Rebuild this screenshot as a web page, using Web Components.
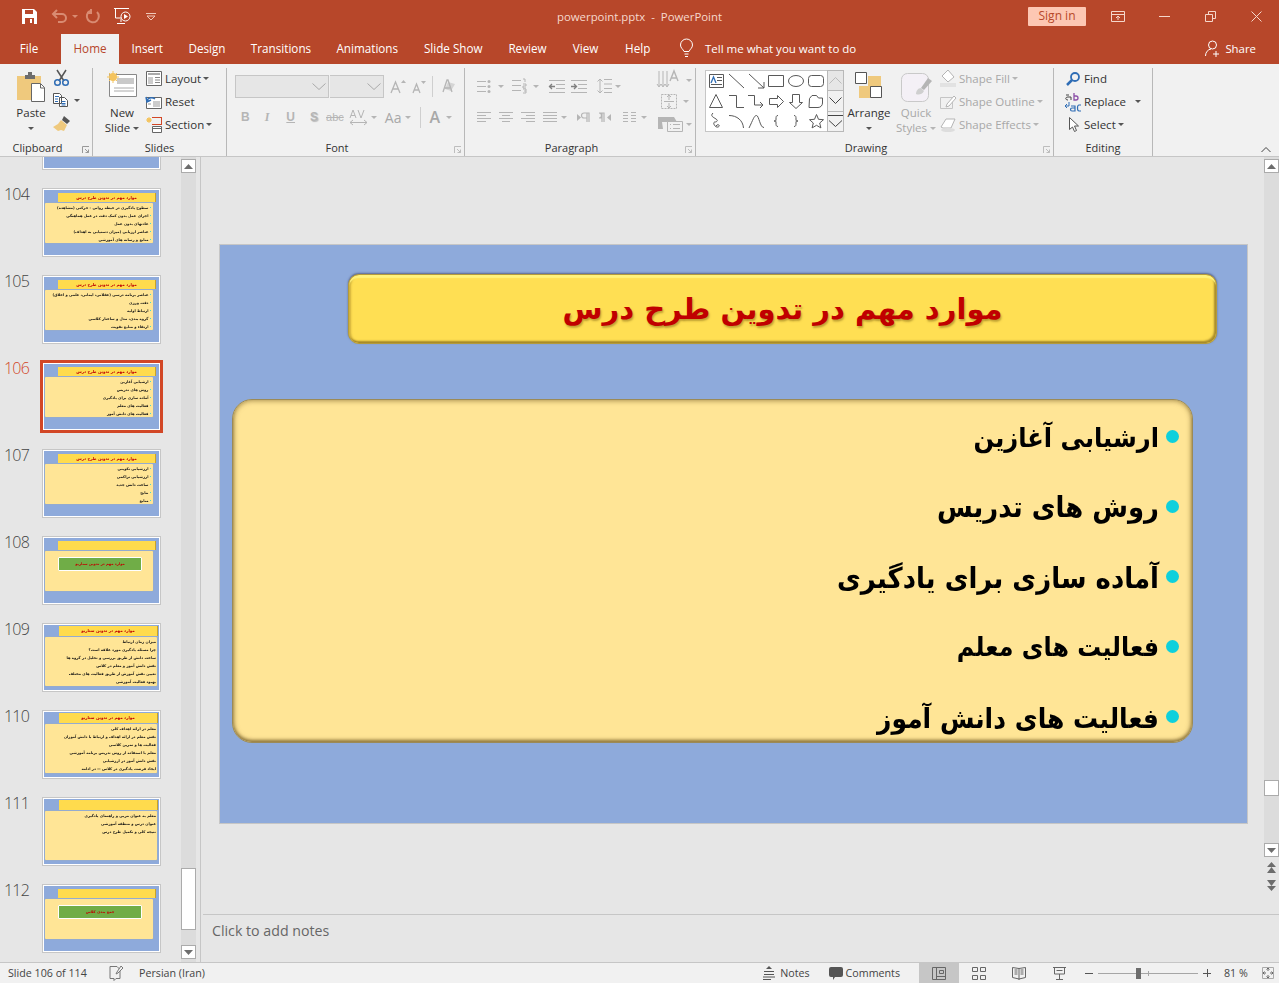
<!doctype html>
<html lang="en">
<head>
<meta charset="utf-8">
<title>powerpoint.pptx - PowerPoint</title>
<style>
  html, body { margin: 0; height: 100%; overflow: hidden; background: #e6e6e6; }
  body { font: 12px "Open Sans", "Noto Sans", sans-serif; color: #333; }
</style>
</head>
<body>
<pp-app></pp-app>

<script>
'use strict'

// ---- icons: [width, height, markup] ----

const G = '#b5b5b5'   // disabled ribbon grey
const D = '#595959'
const B = '#2f6db5'
const T = '#efc97d'

const ICONS = {
  save: [15, 15, `<path d="M0 0h12l3 3v12H0z" fill="#fff"/><path d="M3 1h8v4H3z" fill="#b7472a"/><path d="M3 9h9v6H3z" fill="#b7472a"/><path d="M8 10h2v4H8z" fill="#fff"/>`],
  undo: [16, 14, `<path d="M5 1 1 5l4 4M1 5h9a4 4 0 0 1 0 8H6" fill="none" stroke="#d98b72" stroke-width="2"/>`],
  redo: [14, 14, `<path d="M4 2a6 6 0 1 0 7 1M5 0v4H1" fill="none" stroke="#d98b72" stroke-width="2"/>`],
  present: [17, 17, `<path d="M0 .5h15M1.5 1v9h6M7 11v3M3 15.5h8" fill="none" stroke="#fff"/><circle cx="11.5" cy="8.5" r="4.5" fill="#b7472a" stroke="#fff"/><path d="M10 6v5l4-2.5z" fill="#fff"/>`],
  qat: [10, 7, `<path d="M0 .5h10M1 3h8L5 7z" fill="none" stroke="#f0c8b8"/>`],
  bulb: [13, 18, `<path d="M4 12.5C3 10 .5 9 .5 6a6 6 0 0 1 12 0c0 3-2.5 4-3.5 6.5zM4.5 15h4M5 17.5h3" fill="none" stroke="#fff"/>`],
  person: [15, 17, `<circle cx="7.5" cy="5" r="4" fill="none" stroke="#fff"/><path d="M.5 16c0-4 2.5-6.5 5.5-7M11 11v6M8 14h6" fill="none" stroke="#fff"/>`],
  ribbonopt: [14, 11, `<path d="M.5.5h13v10H.5zM.5 3.5h13M7 9V5M5 7l2-2 2 2" fill="none" stroke="#f5d7cb"/>`],
  minimize: [11, 1, `<path d="M0 .5h11" stroke="#f5d7cb"/>`],
  restore: [11, 11, `<path d="M.5 3.5h7v7h-7zM3.5 3V.5h7v7H8" fill="none" stroke="#f5d7cb"/>`],
  close: [11, 11, `<path d="M.5.5l10 10M10.5.5l-10 10" stroke="#f5d7cb"/>`],

  paste: [28, 30, `<path d="M0 4h24v24H0z" fill="${T}"/><path d="M8 3h3V0h4v3h3v4H8z" fill="#6d6d6d"/><path d="M14.5 11.5h9l4 4v14h-13z" fill="#fff" stroke="#666"/><path d="M23.5 12v4h4" fill="none" stroke="#666"/>`],
  cut: [15, 16, `<path d="M3 0l7 11M12 0 5 11" stroke="#555" stroke-width="1.5"/><circle cx="3.5" cy="12.5" r="2.8" fill="none" stroke="${B}" stroke-width="1.5"/><circle cx="11.5" cy="12.5" r="2.8" fill="none" stroke="${B}" stroke-width="1.5"/>`],
  copy: [15, 14, `<path d="M.5.5h6l2 2v8h-8zM6.5 4.5h5l3 3v6h-8z" fill="#fff" stroke="#555"/><path d="M2 3.5h4M2 6h3M2 8.5h3M8.5 8.5h4M8.5 10.5h4M8.5 12h4" stroke="${B}"/>`],
  painter: [17, 15, `<path d="M11 0l6 5-3 3-5-4z" fill="#555"/><path d="M8 4l6 5-3 6-3-1-3 1-5-4 5-3z" fill="${T}"/>`],
  newslide: [31, 27, `<path d="M2.5 3.5h27v22h-27z" fill="#fff" stroke="#888"/><path d="M10 7h17v6H10z" fill="#c9c9c9"/><path d="M7 17h20M7 20h20" stroke="#aaa"/><circle cx="6" cy="6" r="4" fill="#f4c45f"/><path d="M6 0v12M0 6h12M2 2l8 8M10 2l-8 8" stroke="#f4c45f"/>`],
  layout: [16, 15, `<path d="M.5.5h15v14H.5z" fill="#fff" stroke="#666"/><path d="M2 2h12v2H2z" fill="#aaa"/><path d="M2 6h5v7H2z" fill="#ccc"/><path d="M9 6.5h5M9 9h5M9 11.5h5" stroke="#888"/>`],
  reset: [16, 15, `<path d="M.5 3.5h15v11H.5z" fill="#fff" stroke="#666"/><path d="M7 7h7v6H7z" fill="#ccc"/><path d="M2 10h3" stroke="#999"/><path d="M9 5A5 4 0 0 0 2 5l-1 3M0 3l1 5 4-2" fill="none" stroke="${B}" stroke-width="1.5"/>`],
  section: [16, 16, `<path d="M6 .5h10M6 7.5h10M15.5 0v8" stroke="#d24726" fill="none"/><path d="M6.5 9.5h9v6h-9zM6.5 11.5h9" fill="#fff" stroke="#666"/><circle cx="3" cy="3" r="2" fill="#f4c45f"/><path d="M3 0v6M0 3h6M1 1l4 4M5 1 1 5" stroke="#f4c45f"/>`],
  grow: [15, 13, `<path d="M0 13 4.5 2 9 13M2 9h5" fill="none" stroke="${G}" stroke-width="1.3"/><path d="M10 3l2.5-3L15 3z" fill="${G}"/>`],
  shrink: [14, 12, `<path d="M1 12 4.5 3 8 12M2 9h5" fill="none" stroke="${G}" stroke-width="1.3"/><path d="M9 0h5l-2.5 3z" fill="${G}"/>`],
  av: [17, 15, `<path d="M0 8 3 0l3 8M1 5.5h4M8 0l3 8 3-8" fill="none" stroke="${G}"/><path d="M0 12.5h17M3 10l-3 2.5L3 15M14 10l3 2.5-3 2.5" fill="none" stroke="${G}"/>`],
  eraser: [15, 16, `<path d="M6 3l7 2-4 7-6-2z" fill="#d5d5d5"/><path d="M1 13 5 1h1l4 12M3 9h5" fill="none" stroke="${G}" stroke-width="1.3"/>`],
  bullets: [14, 13, `<path d="M0 1.5h9M0 6.5h9M0 11.5h9" stroke="${G}"/><circle cx="12" cy="1.5" r="1.5" fill="${G}"/><circle cx="12" cy="6.5" r="1.5" fill="${G}"/><circle cx="12" cy="11.5" r="1.5" fill="${G}"/>`],
  numbers: [14, 14, `<path d="M0 1.5h9M0 6.5h9M0 11.5h9M11 0h2v3M11 5h3v2h-3v2h3M11 10h3v4h-3M12 12h2" fill="none" stroke="${G}"/>`],
  indentl: [16, 13, `<path d="M0 .5h16M7 4.5h9M7 8.5h9M0 12.5h16" stroke="${G}"/><path d="M0 6.5h6M3 4 .5 6.5 3 9" fill="none" stroke="${D}" opacity=".75" stroke-width="1.3"/>`],
  indentr: [16, 13, `<path d="M0 .5h16M7 4.5h9M7 8.5h9M0 12.5h16" stroke="${G}"/><path d="M0 6.5h5M3 4l2.5 2.5L3 9" fill="none" stroke="${D}" opacity=".75" stroke-width="1.3"/>`],
  linesp: [15, 16, `<path d="M7 1.5h8M7 6h8M7 10.5h8M7 14.5h8M3 1v14M.5 3.5 3 1l2.5 2.5M.5 12.5 3 15l2.5-2.5" fill="none" stroke="${G}"/>`],
  left: [14, 11, `<path d="M0 .5h14M0 3.5h9M0 6.5h14M0 9.5h9" stroke="${G}"/>`],
  center: [14, 11, `<path d="M0 .5h14M3 3.5h8M0 6.5h14M3 9.5h8" stroke="${G}"/>`],
  right: [14, 11, `<path d="M0 .5h14M5 3.5h9M0 6.5h14M5 9.5h9" stroke="${G}"/>`],
  justify: [14, 11, `<path d="M0 .5h14M0 3.5h14M0 6.5h14M0 9.5h14" stroke="${G}"/>`],
  ltr: [12, 9, `<path d="M0 1l4 3.5L0 8z" fill="${G}"/><path d="M7 0h5v9M10 0v9M7 0a2.5 2.5 0 0 0 0 5h3" fill="none" stroke="${G}" stroke-width="1.2"/>`],
  rtl: [12, 9, `<path d="M12 1 8 4.5 12 8z" fill="${G}"/><path d="M0 0h5v9M3 0v9M0 0a2.5 2.5 0 0 1 0 5h3" fill="none" stroke="${G}" stroke-width="1.2"/>`],
  columns: [13, 11, `<path d="M0 .5h5M8 .5h5M0 3.5h5M8 3.5h5M0 6.5h5M8 6.5h5M0 9.5h5M8 9.5h5" stroke="${G}"/>`],
  textdir: [25, 18, `<path d="M1 0v15M5 0v15M9 0v15M-1 13l2 3 2-3M3 13l2 3 2-3M7 13l2 3 2-3" fill="none" stroke="${G}"/><path d="M12 10 16 0l4 10M13.5 7h5" fill="none" stroke="${G}" stroke-width="1.4"/>`],
  textalign: [16, 15, `<path d="M.5.5h15v14H.5z" fill="none" stroke="${G}" stroke-dasharray="2 1"/><path d="M8 1v5M6 3l2-2 2 2M8 14V9M6 12l2 2 2-2M3 7.5h10" fill="none" stroke="${G}"/>`],
  smartart: [25, 16, `<path d="M0 1h16l3 5H4l1 7H0z" fill="${G}"/><path d="M9.5 5.5h15v10h-15z" fill="#f1f1f1" stroke="${G}"/><path d="M12 8.5h1M15 8.5h7M12 12.5h1M15 12.5h7" stroke="${G}"/>`],

  textbox: [15, 14, `<path d="M.5.5h14v13H.5z" fill="#fff" stroke="${D}"/><path d="M2 9l2.5-6L7 9" fill="none" stroke="${B}" stroke-width="1.3"/><path d="M8 3.5h5M8 6.5h5M2 10.5h11" stroke="${D}"/>`],
  sline: [15, 14, `<path d="M0 0l15 14" stroke="${D}"/>`],
  sarrow: [15, 14, `<path d="M0 0l15 14M9 14h6V8" fill="none" stroke="${D}"/>`],
  srect: [16, 12, `<path d="M.5.5h15v11H.5z" fill="none" stroke="${D}"/>`],
  sellipse: [16, 12, `<ellipse cx="8" cy="6" rx="7.5" ry="5.5" fill="none" stroke="${D}"/>`],
  sround: [16, 12, `<rect x=".5" y=".5" width="15" height="11" rx="3" fill="none" stroke="${D}"/>`],
  striangle: [14, 14, `<path d="M7 .5l6.5 13H.5z" fill="none" stroke="${D}"/>`],
  selbow: [15, 13, `<path d="M0 .5h7.5v12H15" fill="none" stroke="${D}"/>`],
  selbowa: [16, 13, `<path d="M0 .5h6.5V10H15M12 7l3 3-3 3" fill="none" stroke="${D}"/>`],
  sarrowr: [15, 13, `<path d="M.5 3.5h8V.5l6 6-6 6v-3h-8z" fill="none" stroke="${D}"/>`],
  sarrowd: [14, 15, `<path d="M3.5.5h7v8h3L7 14.5.5 8.500h3z" fill="none" stroke="${D}"/>`],
  ssnip: [14, 13, `<path d="M.5 3.5 3 .5h4.500l2 2.500h4v5c0 2.500-2 4.500-4.500 4.500h-9z" fill="none" stroke="${D}"/>`],
  sfree: [10, 16, `<path d="M2 0c-3 3 0 4 3 6 3 2 0 3-1 3-3 0 0 6 3 5 3-1 0-4-2-1" fill="none" stroke="${D}"/>`],
  sarc: [15, 13, `<path d="M0 .5c8 0 14 5 14.5 12.5" fill="none" stroke="${D}"/>`],
  scurve: [15, 13, `<path d="M0 13C4 5 5 .5 7.5.5S11 13 15 12.5" fill="none" stroke="${D}"/>`],
  slbrace: [6, 12, `<path d="M5 .5C3 .5 3 2 3 4s0 2-2 2c2 0 2 0 2 2s0 3.5 2 3.5" fill="none" stroke="${D}"/>`],
  srbrace: [6, 12, `<path d="M1 .5C3 .5 3 2 3 4s0 2 2 2c-2 0-2 0-2 2s0 3.5-2 3.5" fill="none" stroke="${D}"/>`],
  sstar: [15, 14, `<path d="M7.5.5l2 4.8 5 .4-3.800 3.300 1.200 4.900-4.400-2.600-4.400 2.600 1.200-4.900L.5 5.700l5-.4z" fill="none" stroke="${D}"/>`],

  arrange: [28, 27, `<path d="M13 4h13v12H13zM4 14h14v12H4z" fill="${T}"/><path d="M.5.5h11v11H.5zM15.5 14.5h11v11h-11z" fill="#fff" stroke="#555"/>`],
  quick: [32, 31, `<rect x=".5" y=".5" width="27" height="28" rx="6" fill="#f4f0f6" stroke="#c9c9c9"/><path d="M31 8l-8 9-3-2 7-10z" fill="${G}"/><path d="M20 15c-3 0-5 3-5 6 2 1 6 1 8-3z" fill="#cfcfcf"/>`],
  fill: [16, 17, `<path d="M8 0l6 7-6 5-6-6z" fill="#fff" stroke="${G}"/><path d="M0 13h16v4H0z" fill="#e2e2e2"/>`],
  outline: [16, 14, `<path d="M.5 2.5h12v11H.5z" fill="none" stroke="#c5c5c5"/><path d="M7 9l-1 3 3-1 7-8-2-2z" fill="#fff" stroke="${G}"/>`],
  effects: [16, 14, `<path d="M1 9 6 1h9l-4 9H3z" fill="#fff" stroke="${G}"/><ellipse cx="8" cy="12" rx="7" ry="2" fill="#ddd"/>`],
  find: [14, 14, `<circle cx="9" cy="5" r="4" fill="none" stroke="#2f6db5" stroke-width="1.8"/><path d="M6 8l-5 5" stroke="#2f6db5" stroke-width="2.5"/>`],
  replace: [16, 18, `<path d="M3 7c-3 0-3-3 0-3h3v3M1 2h3" fill="none" stroke="#444"/><path d="M9 0v7h2a2 2 0 0 0 0-4H9" fill="none" stroke="#8b4fa8" stroke-width="1.3"/><path d="M0 13h4M2 11l-2 2 2 2M4 9v4" fill="none" stroke="${B}"/><path d="M6 13h4v5H7c-2 0-2-3 0-3h3" fill="none" stroke="${B}" stroke-width="1.2"/><path d="M16 12h-2c-2 0-2 6 0 6h2" fill="none" stroke="${B}" stroke-width="1.2"/>`],
  cursor: [10, 15, `<path d="M.5.5v12l3-2.5 2 4.5 2-1-2-4.5h4z" fill="#fff" stroke="#555"/>`],
  collapse: [10, 5, `<path d="M.5 5 5 .5 9.5 5" fill="none" stroke="#444"/>`],
  launcher: [7, 7, `<path d="M.5 7V.5H7M3 3l3.5 3.5M3.5 6.5h3v-3" fill="none" stroke="#999"/>`],
  launcherd: [7, 7, `<path d="M.5 7V.5H7M3 3l3.5 3.5M3.5 6.5h3v-3" fill="none" stroke="#bdbdbd"/>`],
  chevd: [14, 7, `<path d="M.5.5 7 6.5 13.5.5" fill="none" stroke="#aaa"/>`],
  galup: [13, 7, `<path d="M.5 6.5 6.5.5l6 6" fill="none" stroke="#bbb"/>`],
  galdn: [13, 7, `<path d="M.5.5l6 6 6-6" fill="none" stroke="#444"/>`],
  galmore: [15, 13, `<path d="M0 .5h15" stroke="#444"/><path d="M1 5.5l6.5 6 6.5-6" fill="none" stroke="#444"/>`],

  sbup: [9, 5, `<path d="M4.5 0 9 5H0z" fill="#6d6d6d"/>`],
  sbdown: [9, 5, `<path d="M0 0h9L4.5 5z" fill="#6d6d6d"/>`],
  pageup: [9, 11, `<path d="M4.5 0 9 5H0zM4.5 5 9 11H0z" fill="#6d6d6d"/>`],
  pagedown: [9, 11, `<path d="M0 0h9L4.5 6zM0 6h9l-4.5 5z" fill="#6d6d6d"/>`],

  notesicon: [15, 15, `<path d="M2 .5h7l3 3v9H8l-2 2v-2H2z" fill="none" stroke="#777"/><path d="M13 0l2 2-5 5-2 1 1-2z" fill="#f1f1f1" stroke="#777"/>`],
  notesbtn: [12, 14, `<path d="M1 5.5h10M1 8.5h10M0 11h12M0 13.5h8" stroke="#555" fill="none"/><path d="M3 3l3-3 3 3z" fill="#555"/>`],
  comment: [14, 13, `<path d="M2 0h10a2 2 0 0 1 2 2v6a2 2 0 0 1-2 2H6l-2 3v-3H2a2 2 0 0 1-2-2V2a2 2 0 0 1 2-2z" fill="#555"/>`],
  vnormal: [14, 13, `<path d="M.5.5h13v12H.5zM4.5.5v12M7.5 3.5h4v3h-4zM4.5 9.5h9" fill="none" stroke="#666"/>`],
  vsorter: [14, 13, `<path d="M.5.5h5v4h-5zM8.5.5h5v4h-5zM.5 8.5h5v4h-5zM8.5 8.5h5v4h-5z" fill="none" stroke="#666"/>`],
  vreading: [14, 14, `<path d="M.5 1.5l6.5 1 6.5-1v10L7 13 .5 11.5zM7 2v12M2.5 4h3M2.5 6h3M2.5 8h3M8.5 4h3M8.5 6h3M8.5 8h3" fill="none" stroke="#666"/>`],
  vshow: [13, 13, `<path d="M0 .5h13M1.5 1v6h10V1M6.5 7v5M3 12.5h7M3.5 3.5h6" fill="none" stroke="#666"/>`],
  fit: [12, 12, `<path d="M.5.5h11v11H.5z" fill="none" stroke="#aaa"/><path d="M6 1v3M4.5 2.5 6 1l1.5 1.5M6 11V8M4.5 9.5 6 11l1.5-1.5M1 6h3M2.5 4.5 1 6l1.5 1.5M11 6H8M9.5 4.5 11 6 9.5 7.5" fill="none" stroke="#666"/>`]
}

class PpIcon extends HTMLElement {
  connectedCallback() {
    if (this.shadowRoot) return
    const [w, h, body] = ICONS[this.getAttribute('n')]
    this.attachShadow({ mode: 'open' }).innerHTML = `
      <style>:host { display: block; flex: none; width: ${w}px; height: ${h}px; line-height: 0; } svg { display: block; overflow: visible; }</style>
      <svg width="${w}" height="${h}" viewBox="0 0 ${w} ${h}" xmlns="http://www.w3.org/2000/svg">${body}</svg>`
  }
}
customElements.define('pp-icon', PpIcon)


// ---- title bar ----

class PpTitlebar extends HTMLElement {
  constructor() {
    super()
    this.attachShadow({ mode: 'open' }).innerHTML = `
      <style>
        :host { display: grid; grid-template-columns: 1fr auto 1fr; align-items: center; height: 32px; background: #b7472a; color: #f6d9cd; font-size: 11.4px; }
        .qat, .win { display: flex; align-items: center; }
        .qat { padding-left: 22px; }
        .win { justify-content: flex-end; }
        .caret { width: 0; height: 0; border: 3px solid transparent; border-bottom: 0; border-top-color: #d98b72; margin: 0 8px 0 4px; }
        .signin { width: 58px; height: 19px; line-height: 18px; text-align: center; background: #fdc7b3; color: #b7472a; border-radius: 1px; font-size: 12px; margin-right: 25px; }
        .gap1 { margin-left: 14px; } .gap2 { margin-left: 15px; }
        .w1 { margin-right: 34px; } .w2 { margin-right: 35px; } .w3 { margin-right: 35px; } .w4 { margin-right: 17px; }
      </style>
      <div class="qat">
        <pp-icon n="save"></pp-icon>
        <pp-icon n="undo" style="margin-left:15px"></pp-icon>
        <span class="caret"></span>
        <pp-icon n="redo"></pp-icon>
        <pp-icon n="present" class="gap1"></pp-icon>
        <pp-icon n="qat" class="gap2"></pp-icon>
      </div>
      <div>powerpoint.pptx&nbsp; - &nbsp;PowerPoint</div>
      <div class="win">
        <div class="signin">Sign in</div>
        <pp-icon n="ribbonopt" class="w1"></pp-icon>
        <pp-icon n="minimize" class="w2"></pp-icon>
        <pp-icon n="restore" class="w3"></pp-icon>
        <pp-icon n="close" class="w4"></pp-icon>
      </div>`
  }
}
customElements.define('pp-titlebar', PpTitlebar)


// ---- tabs ----

const TABS = [['File', 58], ['Home', 58], ['Insert', 56.5], ['Design', 63], ['Transitions', 85], ['Animations', 87.5], ['Slide Show', 84.5], ['Review', 64], ['View', 52], ['Help', 52.5]]

class PpTabs extends HTMLElement {
  constructor() {
    super()
    this.attachShadow({ mode: 'open' }).innerHTML = `
      <style>
        :host { display: flex; align-items: stretch; height: 32px; background: #b7472a; color: #fff; font-size: 11.7px; }
        .tab { flex: none; display: flex; align-items: center; justify-content: center; height: 30px; margin-top: 2px; padding-bottom: 2px; box-sizing: border-box; white-space: nowrap; }
        .tab.on { background: #f1f1f1; color: #b7472a; }
        .tab.file { margin-right: 3px; }
        .tell { display: flex; align-items: center; gap: 12px; margin-left: 16px; font-size: 11.5px; }
        .share { display: flex; align-items: center; gap: 5px; margin-left: auto; margin-right: 23px; font-size: 11.4px; }
      </style>
      ${TABS.map(([t, w]) => `<div class="tab${t == 'Home' ? ' on' : ''}${t == 'File' ? ' file' : ''}" style="width:${w}px">${t}</div>`).join('')}
      <div class="tell"><pp-icon n="bulb"></pp-icon><span>Tell me what you want to do</span></div>
      <div class="share"><pp-icon n="person"></pp-icon><span>Share</span></div>`
  }
}
customElements.define('pp-tabs', PpTabs)


// ---- ribbon ----

class PpGroup extends HTMLElement {
  constructor() {
    super()
    const corner = this.getAttribute('launcher')
    this.attachShadow({ mode: 'open' }).innerHTML = `
      <style>
        :host { display: flex; flex: none; flex-direction: column; box-sizing: border-box; height: 88px; margin-top: 4px; border-right: 1px solid #b8b8b8; position: relative; }
        .body { flex: 1; display: flex; min-height: 0; }
        .label { height: 14px; line-height: 14px; margin-bottom: 1px; padding-right: ${corner ? 17 : 0}px; text-align: center; color: #333; font-size: 11px; }
        pp-icon { position: absolute; right: 3px; bottom: 3px; }
      </style>
      <div class="body"><slot></slot></div>
      <div class="label"></div>`
    this.shadowRoot.querySelector('.label').textContent = this.getAttribute('label')
    if (corner) {
      const i = document.createElement('pp-icon')
      i.setAttribute('n', corner)
      this.shadowRoot.appendChild(i)
    }
  }
}
customElements.define('pp-group', PpGroup)

const GALLERY = ['textbox', 'sline', 'sarrow', 'srect', 'sellipse', 'sround', 'striangle', 'selbow', 'selbowa', 'sarrowr', 'sarrowd', 'ssnip', 'sfree', 'sarc', 'scurve', 'slbrace', 'srbrace', 'sstar']

class PpRibbon extends HTMLElement {
  constructor() {
    super()
    const ic = (n, st) => `<pp-icon n="${n}"${st ? ` style="${st}"` : ''}></pp-icon>`
    const caret = (st) => `<i class="caret"${st ? ` style="${st}"` : ''}></i>`
    const off = (st) => `<i class="caret off"${st ? ` style="${st}"` : ''}></i>`
    this.attachShadow({ mode: 'open' }).innerHTML = `
      <style>
        :host { display: flex; position: relative; height: 93px; box-sizing: border-box; background: #f1f1f1; border-bottom: 1px solid #c6c6c6; font-size: 11.5px; color: #333; }
        .caret { display: inline-block; width: 0; height: 0; border: 3px solid transparent; border-bottom: 0; border-top-color: #555; flex: none; }
        .caret.off { border-top-color: #b5b5b5; }
        .big { display: flex; flex-direction: column; align-items: center; flex: none; line-height: 15px; text-align: center; }
        .big .words { margin-top: auto; height: 36px; }
        .stack { display: flex; flex-direction: column; flex: none; margin-top: -1px; }
        .row { display: flex; align-items: center; height: 23px; white-space: nowrap; }
        .off-t { color: #a8a8a8; }
        .wordcaret { display: block; height: 15px; position: relative; top: -2px; }
        .combo { height: 21px; background: #e6e6e6; border: 1px solid #c6c6c6; display: flex; align-items: center; justify-content: flex-end; padding-right: 2px; }
        .vsep { width: 1px; height: 21px; background: #cfcfcf; }
        .bu { font: bold 12px "Liberation Sans", sans-serif; color: #b5b5b5; }
        .gal { display: flex; margin: 2px 0 0 9px; height: 62px; }
        .shapes { display: grid; grid-template-columns: repeat(6, 20px); grid-auto-rows: 20px; place-items: center; box-sizing: border-box; width: 122px; height: 62px; background: #fff; border: 1px solid #c6c6c6; border-right: 0; }
        .galbtns { display: flex; flex-direction: column; width: 17px; border: 1px solid #b8b8b8; box-sizing: border-box; }
        .galbtns div { flex: 1; display: flex; align-items: center; justify-content: center; border-top: 1px solid #b8b8b8; background: #f1f1f1; }
        .galbtns div:first-child { border-top: 0; background: #e6e6e6; }
        .chev { position: absolute; right: 8px; bottom: 4px; }
      </style>

      <pp-group label="Clipboard" launcher="launcher" style="width:93px">
        <div class="big" style="width:28px;margin-left:17px;padding-top:4px">
          ${ic('paste')}
          <div class="words"><div>Paste</div><span class="wordcaret">${caret()}</span></div>
        </div>
        <div style="display:flex;flex-direction:column;margin-left:8px;padding-top:2px">
          ${ic('cut', 'margin-left:1px')}
          <div style="display:flex;align-items:center;gap:6px;margin-top:7px">${ic('copy')}${caret()}</div>
          ${ic('painter', 'margin-top:9px')}
        </div>
      </pp-group>

      <pp-group label="Slides" style="width:134px">
        <div class="big" style="width:36px;margin-left:11px;padding-top:3px">
          ${ic('newslide', 'margin-left:1px')}
          <div class="words"><div>New</div><div>Slide ${caret('vertical-align:2px')}</div></div>
        </div>
        <div class="stack" style="margin-left:6px">
          <div class="row">${ic('layout')}<span style="margin:0 2px 0 3px">Layout</span>${caret()}</div>
          <div class="row">${ic('reset')}<span style="margin-left:3px">Reset</span></div>
          <div class="row">${ic('section')}<span style="margin:0 2px 0 3px">Section</span>${caret()}</div>
        </div>
      </pp-group>

      <pp-group label="Font" launcher="launcherd" style="width:238px">
        <div style="display:flex;flex-direction:column;margin-left:8px;padding-top:7px">
          <div style="display:flex;align-items:center">
            <div class="combo" style="width:90px">${ic('chevd')}</div>
            <div class="combo" style="width:51px;border-left:0;margin-left:1px">${ic('chevd')}</div>
            ${ic('grow', 'margin-left:7px')}
            ${ic('shrink', 'margin-left:6px')}
            <span class="vsep" style="margin-left:6px"></span>
            ${ic('eraser', 'margin-left:9px')}
          </div>
          <div style="display:flex;align-items:center;height:20px;margin-top:9px">
            <span class="bu" style="margin-left:6px">B</span>
            <span class="bu" style="margin-left:15px;font-style:italic;font-family:'Liberation Serif'">I</span>
            <span class="bu" style="margin-left:17px;text-decoration:underline">U</span>
            <span class="bu" style="margin-left:15px;text-shadow:1px 1px 1px #bbb">S</span>
            <span class="bu" style="margin-left:8px;font-weight:normal;font-size:11px;text-decoration:line-through">abc</span>
            ${ic('av', 'margin-left:6px')}${off('margin-left:4px')}
            <span class="off-t" style="margin-left:8px;font-size:14px">Aa</span>${off('margin-left:4px')}
            <span class="vsep" style="margin-left:9px"></span>
            <span class="off-t" style="margin-left:8px;font-size:16px;font-weight:600">A</span>${off('margin-left:6px')}
          </div>
        </div>
      </pp-group>

      <pp-group label="Paragraph" launcher="launcherd" style="width:231px">
        <div style="display:flex;flex-direction:column;width:181px;margin-left:12px;padding-top:10px">
          <div style="display:flex;align-items:center;height:16px">
            ${ic('bullets')}${off('margin-left:7px')}
            ${ic('numbers', 'margin-left:8px')}${off('margin-left:7px')}
            ${ic('indentl', 'margin-left:10px')}${ic('indentr', 'margin-left:6px')}
            ${ic('linesp', 'margin-left:10px')}${off('margin-left:3px')}
          </div>
          <div style="display:flex;align-items:center;height:16px;margin-top:15px">
            ${ic('left')}${ic('center', 'margin-left:8px')}${ic('right', 'margin-left:8px')}${ic('justify', 'margin-left:8px')}${off('margin-left:4px')}
            ${ic('ltr', 'margin-left:10px')}${ic('rtl', 'margin-left:10px')}${ic('columns', 'margin-left:12px')}${off('margin-left:5px')}
          </div>
        </div>
        <div style="display:flex;flex-direction:column;margin-left:0;padding-top:3px">
          <div style="display:flex;align-items:center;gap:3px">${ic('textdir')}${off()}</div>
          <div style="display:flex;align-items:center;gap:3px;margin-top:5px;padding-left:3px">${ic('textalign')}${off('margin-left:3px')}</div>
          <div style="display:flex;align-items:center;gap:3px;margin-top:7px">${ic('smartart')}${off()}</div>
        </div>
      </pp-group>

      <pp-group label="Drawing" launcher="launcherd" style="width:358px">
        <div class="gal">
          <div class="shapes">${GALLERY.map(n => ic(n)).join('')}</div>
          <div class="galbtns"><div>${ic('galup')}</div><div>${ic('galdn')}</div><div>${ic('galmore')}</div></div>
        </div>
        <div class="big" style="width:44px;margin-left:3px;padding-top:4px">
          ${ic('arrange')}
          <div class="words"><div>Arrange</div><span class="wordcaret">${caret()}</span></div>
        </div>
        <div class="big off-t" style="width:44px;margin-left:3px;padding-top:5px">
          ${ic('quick', 'margin-left:2px')}
          <div class="words"><div>Quick</div><div>Styles ${off('vertical-align:2px')}</div></div>
        </div>
        <div class="stack off-t" style="margin-left:2px">
          <div class="row">${ic('fill')}<span style="margin:0 2px 0 3px">Shape Fill</span>${off()}</div>
          <div class="row">${ic('outline')}<span style="margin:0 2px 0 3px">Shape Outline</span>${off()}</div>
          <div class="row">${ic('effects')}<span style="margin:0 2px 0 3px">Shape Effects</span>${off()}</div>
        </div>
      </pp-group>

      <pp-group label="Editing" style="width:99px">
        <div class="stack" style="margin-left:11px">
          <div class="row">${ic('find', 'margin:0 4px 0 1px')}<span>Find</span></div>
          <div class="row">${ic('replace', 'margin:0 3px 0 0')}<span>Replace</span>${caret('margin-left:9px')}</div>
          <div class="row">${ic('cursor', 'margin:0 5px 0 4px')}<span style="margin-right:2px">Select</span>${caret()}</div>
        </div>
      </pp-group>

      <pp-icon class="chev" n="collapse"></pp-icon>`
  }
}
customElements.define('pp-ribbon', PpRibbon)


// ---- thumbnails ----

const THUMBS = [
  { n: '', title: '', lines: [] },
  { n: 104, title: 'موارد مهم در تدوین طرح درس', lines: ['سطوح یادگیری در حیطه روانی - حرکتی (مشاهده)', 'اجرای عمل بدون کمک   دقت در عمل   هماهنگی', 'عادتهای بدون عمل', 'عناصر ارزیابی (میزان دستیابی به اهداف)', 'منابع و رسانه های آموزشی'] },
  { n: 105, title: 'موارد مهم در تدوین طرح درس', lines: ['عناصر برنامه درسی (عقلانی، ایمانی، علمی و اخلاق)', 'دقت ورزی', 'ارتباط اولیه', 'گروه بندی، مدل و ساختار کلاسی', 'ارتقاء و منابع تقویت'] },
  { n: 106, on: true, title: 'موارد مهم در تدوین طرح درس', lines: ['ارشیابی آغازین', 'روش های تدریس', 'آماده سازی برای یادگیری', 'فعالیت های معلم', 'فعالیت های دانش آموز'] },
  { n: 107, title: 'موارد مهم در تدوین طرح درس', lines: ['ارزشیابی تکوینی', 'ارزشیابی تراکمی', 'ساخت دانش جدید', 'نتایج', 'منابع'] },
  { n: 108, title: '', green: 'موارد مهم در تدوین سناریو', lines: [] },
  { n: 109, wide: true, title: 'موارد مهم در تدوین سناریو', lines: ['میزان زمان ارتباط', 'چرا مسئله یادگیری مورد علاقه است؟', 'ساخت دانش از طریق بررسی و تحلیل در گروه ها', 'نقش دانش آموز و معلم در کلاس', 'تعیین نقش آموزش از طریق فعالیت های مختلف', 'بهبود فعالیت آموزشی'] },
  { n: 110, wide: true, title: 'موارد مهم در تدوین سناریو', lines: ['معلم در ارائه اهداف کلی', 'نقش معلم در ارائه اهداف و ارتباط با دانش آموزان', 'فعالیت ها و تمرین کلاسی', 'معلم با استفاده از روش تدریس برنامه آموزشی', 'نقش دانش آموز در ارزشیابی', 'ایجاد فرصت یادگیری در کلاس — در ادامه'] },
  { n: 111, wide: true, title: '', lines: ['معلم به عنوان مربی و راهنمای یادگیری', 'عنوان درس و منطقه آموزشی', 'نتیجه کلی و تکمیل طرح درس'] },
  { n: 112, title: '', green: 'جمع بندی کلاس', lines: [] }
]

class PpThumb extends HTMLElement {
  set data(t) {
    this.attachShadow({ mode: 'open' }).innerHTML = `
      <style>
        :host { display: flex; height: 87px; box-sizing: border-box; color: #444; font-size: 16px; line-height: 14px; }
        .n { width: 40px; margin-top: -1px; padding-left: 4px; box-sizing: border-box; flex: none; font-weight: 300; letter-spacing: -.8px; }
        .n.on { color: #d24726; }
        .frame { box-sizing: border-box; width: 119px; height: 69px; border: 1px solid #c6c6c6; padding: 1px; box-shadow: inset 0 0 0 1px #fff; margin: 0 0 0 2px; background: #8eaadb; overflow: hidden; display: flex; flex-direction: column; align-items: stretch; filter: blur(.25px); }
        .frame.on { width: 123px; height: 73px; margin: -2px 0 0 0; border: 3px solid #d24726; }
        .ttl { height: 9px; margin: 3px 3px 1px 14px; background: #ffdb4d; border-right: 1px solid #c9a227; color: #c00000; font: bold 4px/9px "DejaVu Sans", sans-serif; text-align: center; direction: rtl; white-space: nowrap; overflow: hidden; flex: none; }
        .wide .ttl { height: 10px; margin: 1px 1px 1px 15px; }
        .bod { margin: 0 6px 0 1px; height: 40px; flex: none; background: #ffe596; border-radius: 1px; box-shadow: 0 0 1px #c9b26a; direction: rtl; font: bold 3.7px/8px "DejaVu Sans", sans-serif; color: #111; padding: 1px 2px 0 0; box-sizing: border-box; white-space: nowrap; overflow: hidden; }
        .wide .bod { margin: 0 2px 0 1px; height: 49px; padding-right: 1px; }
        .bod div::before { content: ''; display: inline-block; width: 1.5px; height: 1.5px; background: #12cfdc; border-radius: 50%; margin-left: 1px; vertical-align: 1px; }
        .wide .bod div::before { display: none; }
        .bod .grn { direction: rtl; margin: 5px 11px 0 13px; height: 14px; background: #70ad47; border: 1px solid #fff; border-radius: 1px; color: #c00000; font: bold 3.7px/12px "DejaVu Sans", sans-serif; text-align: center; box-sizing: border-box; }
        .bod .grn::before { display: none; }
      </style>
      <div class="n${t.on ? ' on' : ''}"></div>
      <div class="frame${t.on ? ' on' : ''}${t.wide ? ' wide' : ''}">
        <div class="ttl"></div>
        <div class="bod"></div>
      </div>`
    const root = this.shadowRoot
    root.querySelector('.n').textContent = t.n
    root.querySelector('.ttl').textContent = t.title
    const bod = root.querySelector('.bod')
    t.lines.forEach(l => {
      const d = document.createElement('div')
      d.textContent = l
      bod.appendChild(d)
    })
    if (t.green) {
      const g = document.createElement('div')
      g.className = 'grn'
      g.textContent = t.green
      bod.style.direction = 'ltr'
      bod.style.padding = '1px 0 0'
      bod.appendChild(g)
    }
  }
}
customElements.define('pp-thumb', PpThumb)


class PpScrollbar extends HTMLElement {
  constructor() {
    super()
    this.attachShadow({ mode: 'open' }).innerHTML = `
      <style>
        :host { display: flex; flex: none; flex-direction: column; align-items: center; width: 15px; background: #dcdcdc; padding-top: 2px; box-sizing: border-box; }
        .btn, .thumb { box-sizing: border-box; width: 15px; background: #fff; border: 1px solid #ababab; flex: none; }
        .btn { height: 14px; display: flex; align-items: center; justify-content: center; }
      </style>
      <div class="btn"><pp-icon n="sbup"></pp-icon></div>
      <div style="height:var(--before)"></div>
      <div class="thumb" style="height:var(--thumb)"></div>
      <div style="height:var(--after)"></div>
      <div class="btn"><pp-icon n="sbdown"></pp-icon></div>`
  }
}
customElements.define('pp-scrollbar', PpScrollbar)


class PpThumbs extends HTMLElement {
  constructor() {
    super()
    this.attachShadow({ mode: 'open' }).innerHTML = `
      <style>
        :host { display: flex; flex: none; width: 201px; box-sizing: border-box; border-right: 1px solid #c6c6c6; background: #e6e6e6; min-height: 0; }
        .list { width: 181px; overflow: hidden; flex: none; }
        .in { margin-top: -57px; padding-top: 1px; }
        pp-scrollbar { --before: 695px; --thumb: 62px; --after: 15px; }
      </style>
      <div class="list"><div class="in"></div></div>
      <pp-scrollbar></pp-scrollbar>`
    const host = this.shadowRoot.querySelector('.in')
    THUMBS.forEach(t => {
      const el = document.createElement('pp-thumb')
      el.data = t
      host.appendChild(el)
    })
  }
}
customElements.define('pp-thumbs', PpThumbs)


// ---- the slide ----

class PpSlide extends HTMLElement {
  constructor() {
    super()
    this.attachShadow({ mode: 'open' }).innerHTML = `
      <style>
        :host { display: flex; flex: none; flex-direction: column; align-items: flex-start; box-sizing: border-box; width: 1029px; height: 580px; background: #8eaadb; border: 1px solid #c6c6c6; padding-top: 29px; font-family: "DejaVu Sans", sans-serif; font-weight: bold; }
        .title { box-sizing: border-box; width: 869px; height: 70px; margin-left: 128px; display: flex; align-items: center; justify-content: center; background: #ffdf53; border: 1px solid #b49a3a; border-radius: 11px; box-shadow: 0 -1px 2px rgba(60,60,90,.6), inset 0 4px 1px -1px #fff27c, inset -2px -2px 2px rgba(120,95,20,.65), inset 2px 0 2px rgba(150,120,30,.45); color: #c00000; font-size: 29px; text-shadow: 1px 2px 2px rgba(130,100,20,.5); }
        .body { box-sizing: border-box; width: 961px; height: 344px; margin: 55px 0 0 12px; background: #ffe596; border: 1px solid #9b8a57; border-radius: 20px; box-shadow: inset 0 0 5px 1px rgba(120,95,40,.6), inset 0 -2px 3px rgba(110,90,40,.6); padding-top: 3px; color: #000; }
        ul { list-style: none; margin: 0; padding: 0; }
        li { display: flex; align-items: center; height: 70px; padding-right: 13px; line-height: 1; }
        li::before { content: ''; flex: none; width: 13px; height: 13px; border-radius: 50%; background: #0fd0dc; margin-left: 7px; position: relative; top: -2px; }
        li span { display: inline-block; transform: scaleY(1.1); }
      </style>
      <div class="title" dir="rtl">موارد مهم در تدوین طرح درس</div>
      <div class="body" dir="rtl"><ul>
        <li style="font-size:24.2px"><span>ارشیابی آغازین</span></li>
        <li style="font-size:25.9px"><span>روش های تدریس</span></li>
        <li style="font-size:26px"><span>آماده سازی برای یادگیری</span></li>
        <li style="font-size:23.8px"><span>فعالیت های معلم</span></li>
        <li style="font-size:25px"><span>فعالیت های دانش آموز</span></li>
      </ul></div>`
  }
}
customElements.define('pp-slide', PpSlide)


class PpEditor extends HTMLElement {
  constructor() {
    super()
    this.attachShadow({ mode: 'open' }).innerHTML = `
      <style>
        :host { display: flex; flex: 1; flex-direction: column; min-width: 0; background: #e6e6e6; }
        .top { display: flex; height: 757px; }
        .canvas { flex: 1; padding: 87px 0 0 18px; box-sizing: border-box; min-width: 0; }
        .side { flex: none; width: 15px; display: flex; flex-direction: column; align-items: center; }
        pp-scrollbar { --before: 607px; --thumb: 16px; --after: 47px; height: 700px; flex: none; }
        .page { display: flex; flex-direction: column; gap: 7px; padding-top: 5px; }
        .notes { margin-left: 2px; height: 48px; border-top: 1px solid #c6c6c6; box-sizing: border-box; padding: 6px 0 0 9px; color: #666; font-size: 14.2px; line-height: 20px; }
      </style>
      <div class="top">
        <div class="canvas"><pp-slide></pp-slide></div>
        <div class="side">
          <pp-scrollbar></pp-scrollbar>
          <div class="page"><pp-icon n="pageup"></pp-icon><pp-icon n="pagedown"></pp-icon></div>
        </div>
      </div>
      <div class="notes">Click to add notes</div>`
  }
}
customElements.define('pp-editor', PpEditor)


// ---- status bar ----

class PpStatusbar extends HTMLElement {
  constructor() {
    super()
    this.attachShadow({ mode: 'open' }).innerHTML = `
      <style>
        :host { display: flex; align-items: center; height: 21px; box-sizing: border-box; background: #f1f1f1; border-top: 1px solid #c6c6c6; color: #444; font-size: 10.7px; white-space: nowrap; }
        .l { padding-left: 8px; width: 108px; box-sizing: border-box; }
        .lang { margin-left: 16px; }
        .r { margin-left: auto; display: flex; align-items: center; height: 100%; }
        .item { display: flex; align-items: center; gap: 5px; }
        .view { width: 40px; height: 100%; display: flex; align-items: center; justify-content: center; }
        .view.on { background: #c6c6c6; }
        .track { width: 100px; height: 1px; background: #a6a6a6; position: relative; margin: 0 5px; }
        .track i { position: absolute; left: 38px; top: -5px; width: 5px; height: 11px; background: #6d6d6d; }
        .track b { position: absolute; left: 50px; top: -2px; width: 1px; height: 5px; background: #a6a6a6; }
        .pm { width: 8px; height: 1px; background: #555; position: relative; flex: none; }
        .pm.plus::after { content: ''; position: absolute; left: 3.5px; top: -3.5px; width: 1px; height: 8px; background: #555; }
      </style>
      <div class="l">Slide 106 of 114</div>
      <pp-icon n="notesicon"></pp-icon>
      <div class="lang">Persian (Iran)</div>
      <div class="r">
        <div class="item" style="margin-right:19px"><pp-icon n="notesbtn"></pp-icon><span>Notes</span></div>
        <div class="item" style="margin-right:19px;gap:3px"><pp-icon n="comment"></pp-icon><span>Comments</span></div>
        <div class="view on"><pp-icon n="vnormal"></pp-icon></div>
        <div class="view"><pp-icon n="vsorter"></pp-icon></div>
        <div class="view"><pp-icon n="vreading"></pp-icon></div>
        <div class="view"><pp-icon n="vshow"></pp-icon></div>
        <span class="pm" style="margin-left:6px"></span>
        <div class="track"><b></b><i></i></div>
        <span class="pm plus"></span>
        <div style="margin-left:13px;width:38px">81 %</div>
        <pp-icon n="fit" style="margin-right:5px"></pp-icon>
      </div>`
  }
}
customElements.define('pp-statusbar', PpStatusbar)


// ---- page ----

class PpApp extends HTMLElement {
  constructor() {
    super()
    this.attachShadow({ mode: 'open' }).innerHTML = `
      <style>
        :host { display: flex; flex-direction: column; width: 1279px; height: 983px; overflow: hidden; }
        .main { display: flex; flex: 1; min-height: 0; }
      </style>
      <pp-titlebar></pp-titlebar>
      <pp-tabs></pp-tabs>
      <pp-ribbon></pp-ribbon>
      <div class="main"><pp-thumbs></pp-thumbs><pp-editor></pp-editor></div>
      <pp-statusbar></pp-statusbar>`
  }
}
customElements.define('pp-app', PpApp)
</script>
</body>
</html>
